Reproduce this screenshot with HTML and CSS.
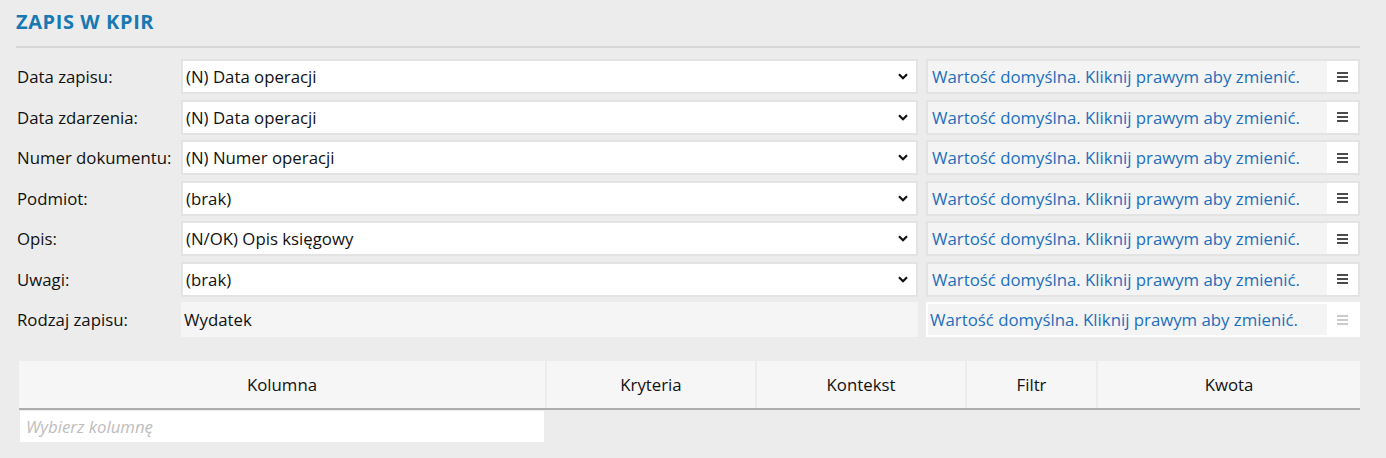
FILE: index.html
```html
<!DOCTYPE html>
<html lang="pl">
<head>
<meta charset="utf-8">
<title>Zapis w KPiR</title>
<link rel="stylesheet" href="styles.css">
</head>
<body>
<div class="page">
  <h1 class="title">ZAPIS W KPIR</h1>
  <div class="form">
    <div class="label">Data zapisu:</div>
    <div class="select"><span>(N) Data operacji</span><svg class="chev" width="10" height="7" viewBox="0 0 10 7"><path d="M1 1.2 L5 5.2 L9 1.2" fill="none" stroke="#111" stroke-width="2.2"/></svg></div>
    <div class="hint"><span class="hint-text">Wartość domyślna. Kliknij prawym aby zmienić.</span><span class="menu"><svg width="11" height="10" viewBox="0 0 11 10"><path d="M0 1h11M0 5h11M0 9h11" stroke="#111" stroke-width="1.6"/></svg></span></div>

    <div class="label">Data zdarzenia:</div>
    <div class="select"><span>(N) Data operacji</span><svg class="chev" width="10" height="7" viewBox="0 0 10 7"><path d="M1 1.2 L5 5.2 L9 1.2" fill="none" stroke="#111" stroke-width="2.2"/></svg></div>
    <div class="hint"><span class="hint-text">Wartość domyślna. Kliknij prawym aby zmienić.</span><span class="menu"><svg width="11" height="10" viewBox="0 0 11 10"><path d="M0 1h11M0 5h11M0 9h11" stroke="#111" stroke-width="1.6"/></svg></span></div>

    <div class="label">Numer dokumentu:</div>
    <div class="select"><span>(N) Numer operacji</span><svg class="chev" width="10" height="7" viewBox="0 0 10 7"><path d="M1 1.2 L5 5.2 L9 1.2" fill="none" stroke="#111" stroke-width="2.2"/></svg></div>
    <div class="hint"><span class="hint-text">Wartość domyślna. Kliknij prawym aby zmienić.</span><span class="menu"><svg width="11" height="10" viewBox="0 0 11 10"><path d="M0 1h11M0 5h11M0 9h11" stroke="#111" stroke-width="1.6"/></svg></span></div>

    <div class="label">Podmiot:</div>
    <div class="select"><span>(brak)</span><svg class="chev" width="10" height="7" viewBox="0 0 10 7"><path d="M1 1.2 L5 5.2 L9 1.2" fill="none" stroke="#111" stroke-width="2.2"/></svg></div>
    <div class="hint"><span class="hint-text">Wartość domyślna. Kliknij prawym aby zmienić.</span><span class="menu"><svg width="11" height="10" viewBox="0 0 11 10"><path d="M0 1h11M0 5h11M0 9h11" stroke="#111" stroke-width="1.6"/></svg></span></div>

    <div class="label">Opis:</div>
    <div class="select"><span>(N/OK) Opis księgowy</span><svg class="chev" width="10" height="7" viewBox="0 0 10 7"><path d="M1 1.2 L5 5.2 L9 1.2" fill="none" stroke="#111" stroke-width="2.2"/></svg></div>
    <div class="hint"><span class="hint-text">Wartość domyślna. Kliknij prawym aby zmienić.</span><span class="menu"><svg width="11" height="10" viewBox="0 0 11 10"><path d="M0 1h11M0 5h11M0 9h11" stroke="#111" stroke-width="1.6"/></svg></span></div>

    <div class="label">Uwagi:</div>
    <div class="select"><span>(brak)</span><svg class="chev" width="10" height="7" viewBox="0 0 10 7"><path d="M1 1.2 L5 5.2 L9 1.2" fill="none" stroke="#111" stroke-width="2.2"/></svg></div>
    <div class="hint"><span class="hint-text">Wartość domyślna. Kliknij prawym aby zmienić.</span><span class="menu"><svg width="11" height="10" viewBox="0 0 11 10"><path d="M0 1h11M0 5h11M0 9h11" stroke="#111" stroke-width="1.6"/></svg></span></div>

    <div class="label">Rodzaj zapisu:</div>
    <div class="static">Wydatek</div>
    <div class="hint hint-static"><span class="hint-text">Wartość domyślna. Kliknij prawym aby zmienić.</span><span class="menu"><svg width="11" height="10" viewBox="0 0 11 10"><path d="M0 1h11M0 5h11M0 9h11" stroke="#b9b9b9" stroke-width="1.6"/></svg></span></div>
  </div>

  <div class="table">
    <div class="thead">
      <div class="th">Kolumna</div>
      <div class="th">Kryteria</div>
      <div class="th">Kontekst</div>
      <div class="th">Filtr</div>
      <div class="th">Kwota</div>
    </div>
    <div class="trow">
      <div class="td-input">Wybierz kolumnę</div>
    </div>
  </div>
</div>
</body>
</html>
```

FILE: styles.css
```css
* { box-sizing: border-box; }
html, body { margin: 0; padding: 0; }
body {
  background: #ececec;
  font-family: "Open Sans", "Noto Sans", sans-serif;
  font-size: 16.8px;
  color: #111;
}
.page {
  padding: 8px 26px 0 16px;
}
.title {
  margin: 0;
  font-size: 20px;
  font-weight: 700;
  color: #1879b2;
  line-height: 28px;
  padding-bottom: 10px;
  border-bottom: 2px solid #d6d6d6;
  letter-spacing: 0.6px;
}
.form {
  margin-top: 11px;
  display: grid;
  grid-template-columns: 165px 1fr 434px;
  column-gap: 8px;
  row-gap: 5.5px;
  grid-auto-rows: 35px;
}
.label {
  display: flex;
  align-items: center;
  padding-left: 1px;
  white-space: nowrap;
}
.select {
  margin-left: -8px;
  background: #fff;
  border: 2px solid #e3e3e3;
  display: flex;
  align-items: center;
  justify-content: space-between;
  padding: 0 8px 0 3px;
}
.chev { display: block; }
.static {
  margin-left: -8px;
  background: #f5f5f5;
  display: flex;
  align-items: center;
  padding-left: 3px;
}
.hint {
  background: #fff;
  border: 2px solid #e3e3e3;
  display: flex;
  align-items: stretch;
}
.hint-text {
  flex: 1;
  background: #f4f4f4;
  color: #1c6fbd;
  display: flex;
  align-items: center;
  padding-left: 4px;
  white-space: nowrap;
}
.menu {
  width: 31px;
  display: flex;
  align-items: center;
  justify-content: center;
}
.hint-static { border-color: transparent; }
.hint-static .hint-text { padding-left: 2px; }
.table {
  margin-top: 24px;
  margin-left: 3px;
}
.thead {
  display: grid;
  grid-template-columns: 526px 208px 208px 129px 1fr;
  column-gap: 2px;
  border-bottom: 2px solid #adadad;
}
.th {
  background: #f6f6f6;
  height: 47px;
  display: flex;
  align-items: center;
  justify-content: center;
}
.trow {
  padding-top: 1px;
}
.td-input {
  width: 524px;
  margin-left: 1px;
  height: 31px;
  background: #fff;
  color: #bdbdbd;
  font-style: italic;
  display: flex;
  align-items: center;
  padding-left: 6px;
}
```
